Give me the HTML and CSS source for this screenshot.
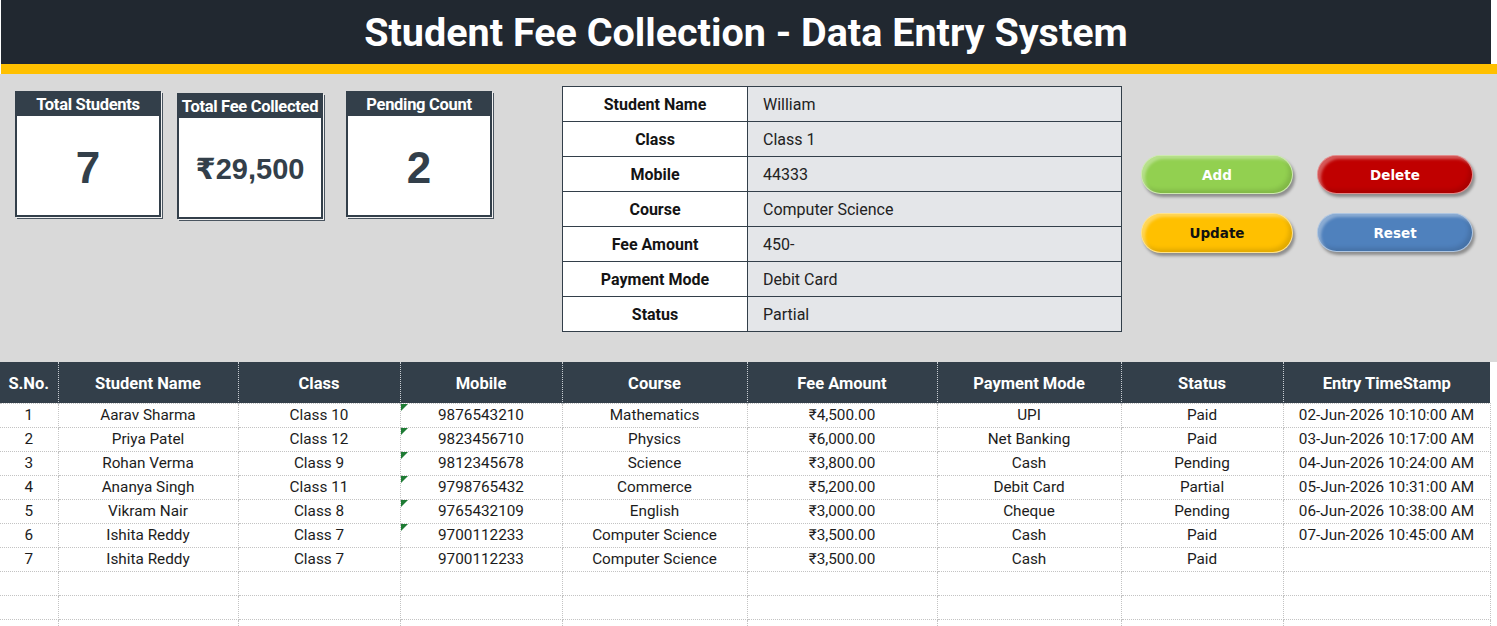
FILE: index.html
```html
<!DOCTYPE html>
<html lang="en">
<head>
<meta charset="utf-8">
<title>Student Fee Collection - Data Entry System</title>
<link rel="stylesheet" href="styles.css">
</head>
<body>
<div class="page">
  <header class="banner"><h1 class="title">Student Fee Collection - Data Entry System</h1></header>
  <div class="accent"></div>

  <section class="top">
    <div class="kpis">
      <div class="kpi">
        <div class="kpi-head">Total Students</div>
        <div class="kpi-val">7</div>
      </div>
      <div class="kpi kpi-mid">
        <div class="kpi-head">Total Fee Collected</div>
        <div class="kpi-val kpi-money">₹29,500</div>
      </div>
      <div class="kpi kpi-last">
        <div class="kpi-head">Pending Count</div>
        <div class="kpi-val">2</div>
      </div>
    </div>

    <table class="form">
      <tr><td class="f-label">Student Name</td><td class="f-value">William</td></tr>
      <tr><td class="f-label">Class</td><td class="f-value">Class 1</td></tr>
      <tr><td class="f-label">Mobile</td><td class="f-value">44333</td></tr>
      <tr><td class="f-label">Course</td><td class="f-value">Computer Science</td></tr>
      <tr><td class="f-label">Fee Amount</td><td class="f-value">450-</td></tr>
      <tr><td class="f-label">Payment Mode</td><td class="f-value">Debit Card</td></tr>
      <tr><td class="f-label">Status</td><td class="f-value">Partial</td></tr>
    </table>

    <div class="actions">
      <button class="btn btn-add">Add</button>
      <button class="btn btn-del">Delete</button>
      <button class="btn btn-upd">Update</button>
      <button class="btn btn-rst">Reset</button>
    </div>
  </section>

  <table class="grid">
    <colgroup>
      <col class="c-sno"><col class="c-name"><col class="c-class"><col class="c-mob"><col class="c-course"><col class="c-fee"><col class="c-mode"><col class="c-status"><col class="c-ts">
    </colgroup>
    <thead>
      <tr><th>S.No.</th><th>Student Name</th><th>Class</th><th>Mobile</th><th>Course</th><th>Fee Amount</th><th>Payment Mode</th><th>Status</th><th>Entry TimeStamp</th></tr>
    </thead>
    <tbody>
      <tr><td>1</td><td>Aarav Sharma</td><td>Class 10</td><td class="txtnum">9876543210</td><td>Mathematics</td><td>₹4,500.00</td><td>UPI</td><td>Paid</td><td>02-Jun-2026 10:10:00 AM</td></tr>
      <tr><td>2</td><td>Priya Patel</td><td>Class 12</td><td class="txtnum">9823456710</td><td>Physics</td><td>₹6,000.00</td><td>Net Banking</td><td>Paid</td><td>03-Jun-2026 10:17:00 AM</td></tr>
      <tr><td>3</td><td>Rohan Verma</td><td>Class 9</td><td class="txtnum">9812345678</td><td>Science</td><td>₹3,800.00</td><td>Cash</td><td>Pending</td><td>04-Jun-2026 10:24:00 AM</td></tr>
      <tr><td>4</td><td>Ananya Singh</td><td>Class 11</td><td class="txtnum">9798765432</td><td>Commerce</td><td>₹5,200.00</td><td>Debit Card</td><td>Partial</td><td>05-Jun-2026 10:31:00 AM</td></tr>
      <tr><td>5</td><td>Vikram Nair</td><td>Class 8</td><td class="txtnum">9765432109</td><td>English</td><td>₹3,000.00</td><td>Cheque</td><td>Pending</td><td>06-Jun-2026 10:38:00 AM</td></tr>
      <tr><td>6</td><td>Ishita Reddy</td><td>Class 7</td><td class="txtnum">9700112233</td><td>Computer Science</td><td>₹3,500.00</td><td>Cash</td><td>Paid</td><td>07-Jun-2026 10:45:00 AM</td></tr>
      <tr><td>7</td><td>Ishita Reddy</td><td>Class 7</td><td>9700112233</td><td>Computer Science</td><td>₹3,500.00</td><td>Cash</td><td>Paid</td><td></td></tr>
      <tr class="blank"><td></td><td></td><td></td><td></td><td></td><td></td><td></td><td></td><td></td></tr>
      <tr class="blank"><td></td><td></td><td></td><td></td><td></td><td></td><td></td><td></td><td></td></tr>
      <tr class="blank"><td></td><td></td><td></td><td></td><td></td><td></td><td></td><td></td><td></td></tr>
    </tbody>
  </table>
</div>
</body>
</html>
```

FILE: styles.css
```css
* { box-sizing: border-box; }

html, body {
  margin: 0;
  padding: 0;
  background: #ffffff;
  overflow: hidden;
}

body {
  font-family: Roboto, "Liberation Sans", Arial, sans-serif;
  color: #1c1c1c;
}

.page {
  width: 1497px;
}

.banner {
  height: 64px;
  background: #212830;
  display: flex;
  align-items: center;
  justify-content: center;
  width: 1490px;
  margin-left: 1px;
}

.title {
  margin: 0;
  color: #ffffff;
  font-family: Roboto, "Liberation Sans", sans-serif;
  font-weight: 700;
  font-size: 39.5px;
  letter-spacing: 0;
  padding-top: 1px;
}

.accent {
  height: 10px;
  background: #ffc000;
  width: 1496px;
  margin-left: 1px;
}

/* ---------- top section ---------- */
.top {
  height: 288px;
  background: #d9d9d9;
  display: flex;
  align-items: flex-start;
  padding: 12px 0 0 15px;
}

.kpis {
  display: flex;
  align-items: flex-start;
  margin-top: 5px;
}

.kpi {
  width: 146px;
  height: 126px;
  background: #ffffff;
  border: 2px solid #333f4a;
  box-shadow: 1px 1px 0 0 #f2f2f2, 2px 2px 0 0 #4a5560;
  display: flex;
  flex-direction: column;
}

.kpi-mid {
  margin-left: 16px;
  margin-top: 2px;
}

.kpi-last {
  margin-left: 23px;
}

.kpi-head {
  height: 23px;
  background: #333f4a;
  color: #ffffff;
  font-weight: 700;
  font-size: 16.5px;
  letter-spacing: -0.3px;
  display: flex;
  align-items: center;
  justify-content: center;
  white-space: nowrap;
  overflow: hidden;
}

.kpi-val {
  flex: 1;
  display: flex;
  align-items: center;
  justify-content: center;
  font-family: "Liberation Sans", Arial, sans-serif;
  font-weight: 700;
  font-size: 44px;
  color: #333f4a;
  padding-top: 4px;
}

.kpi-money {
  font-size: 29px;
  font-family: "Liberation Sans", "DejaVu Sans", Arial, sans-serif;
  padding-top: 2px;
}

/* ---------- form ---------- */
.form {
  margin-left: 70px;
  width: 560px;
  border-collapse: collapse;
  border: 1px solid #333f4a;
}

.form td {
  height: 35px;
  border: 1px solid #333f4a;
  font-size: 16px;
  padding: 0;
}

.f-label {
  width: 185px;
  background: #ffffff;
  font-weight: 700;
  text-align: center;
  color: #141414;
}

.f-value {
  background: #e4e6e9;
  padding-left: 15px !important;
  color: #222222;
}

/* ---------- buttons ---------- */
.actions {
  margin-left: 19px;
  margin-top: 69px;
  display: grid;
  grid-template-columns: 152px 156px;
  column-gap: 24px;
  row-gap: 19px;
}

.btn {
  height: 39px;
  border-radius: 20px;
  font-family: "DejaVu Sans", Verdana, sans-serif;
  font-weight: 700;
  font-size: 13.5px;
  color: #ffffff;
  border: 1px solid rgba(255, 255, 255, 0.55);
  box-shadow:
    inset 3px 3px 3px rgba(255, 255, 255, 0.35),
    inset -3px -3px 4px rgba(0, 0, 0, 0.12),
    2px 3px 3px rgba(0, 0, 0, 0.35);
  cursor: pointer;
  padding: 0;
}

.btn-add { background: #92d050; }
.btn-del { background: #c00000; }
.btn-upd { background: #ffc000; color: #111111; height: 40px; }
.btn-rst { background: #4f81bd; }

/* ---------- data grid ---------- */
.grid {
  width: 1490px;
  border-collapse: collapse;
  table-layout: fixed;
}

.c-sno { width: 58px; }
.c-name { width: 180px; }
.c-class { width: 162px; }
.c-mob { width: 162px; }
.c-course { width: 185px; }
.c-fee { width: 190px; }
.c-mode { width: 184px; }
.c-status { width: 162px; }
.c-ts { width: 207px; }

.grid th {
  height: 41px;
  background: #333f4a;
  color: #ffffff;
  font-size: 16.5px;
  font-weight: 700;
  text-align: center;
  border-left: 1px dotted #c9ced3;
  padding: 2px 0 0 0;
  white-space: nowrap;
}

.grid th:first-child {
  border-left: none;
}

.grid td {
  height: 24px;
  padding: 0;
  text-align: center;
  font-size: 15.3px;
  color: #1c1c1c;
  border: 1px dotted #c3c3c3;
  white-space: nowrap;
}

.grid td:first-child {
  border-left: none;
}

.txtnum {
  position: relative;
}

.txtnum::before {
  content: "";
  position: absolute;
  left: 0;
  top: 0;
  border-top: 7px solid #1e7b34;
  border-right: 7px solid transparent;
}
```
